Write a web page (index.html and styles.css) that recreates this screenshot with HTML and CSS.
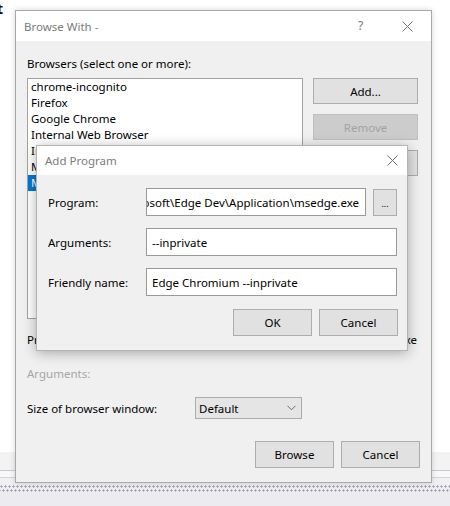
FILE: index.html
```html
<!DOCTYPE html>
<html>
<head>
<meta charset="utf-8">
<title>Browse With</title>
<link rel="stylesheet" href="styles.css">
</head>
<body>
<div class="desk">
  <div class="desk-top"></div>
  <div class="desk-band"></div>
  <div class="desk-band2"></div>
  <div class="desk-band3"></div>
  <div class="desk-dots"></div>
  <div class="desk-bottom"></div>
</div>
<span class="stray">t</span>

<div class="window browse">
  <div class="titlebar">
    <span class="title">Browse With -</span>
    <span class="cap help">?</span>
    <span class="cap"><svg width="11" height="11" viewBox="0 0 11 11"><path d="M0.5 0.5 L10.5 10.5 M10.5 0.5 L0.5 10.5" stroke="#6f6f6f" stroke-width="1" fill="none"/></svg></span>
  </div>
  <div class="body">
    <div class="label">Browsers (select one or more):</div>
    <div class="list-row">
      <ul class="listbox">
        <li>chrome-incognito</li>
        <li>Firefox</li>
        <li>Google Chrome</li>
        <li>Internal Web Browser</li>
        <li>Internet Explorer</li>
        <li>Microsoft Edge</li>
        <li class="selected">Microsoft Edge Chromium --inprivate</li>
      </ul>
      <div class="side-buttons">
        <button class="btn side">Add...</button>
        <button class="btn side disabled">Remove</button>
        <button class="btn side">Set as Default</button>
      </div>
    </div>
    <div class="prog-row">
      <span class="prog-label">Program:</span>
      <span class="prog-path"><span>C:\Program Files (x86)\Microsoft\Edge Dev\Application\msedge.exe</span></span>
    </div>
    <div class="args">Arguments:</div>
    <div class="size-row">
      <span class="size-label">Size of browser window:</span>
      <div class="select">
        <span>Default</span>
        <svg width="9" height="6" viewBox="0 0 9 6"><path d="M0.5 0.8 L4.5 4.8 L8.5 0.8" stroke="#6a6a6a" stroke-width="1" fill="none"/></svg>
      </div>
    </div>
    <div class="footer">
      <button class="btn foot">Browse</button>
      <button class="btn foot">Cancel</button>
    </div>
  </div>
</div>

<div class="window addprog">
  <div class="titlebar">
    <span class="title">Add Program</span>
    <span class="cap small"><svg width="11" height="11" viewBox="0 0 11 11"><path d="M0.5 0.5 L10.5 10.5 M10.5 0.5 L0.5 10.5" stroke="#6f6f6f" stroke-width="1" fill="none"/></svg></span>
  </div>
  <div class="body form">
    <div class="field-row">
      <span class="field-label">Program:</span>
      <div class="field-wrap">
        <div class="input prog"><span>C:\Program Files (x86)\Microsoft\Edge Dev\Application\msedge.exe</span></div>
        <button class="btn dots">...</button>
      </div>
    </div>
    <div class="field-row">
      <span class="field-label">Arguments:</span>
      <div class="input wide"><span>--inprivate</span></div>
    </div>
    <div class="field-row">
      <span class="field-label">Friendly name:</span>
      <div class="input wide"><span>Edge Chromium --inprivate</span></div>
    </div>
    <div class="form-footer">
      <button class="btn foot">OK</button>
      <button class="btn foot">Cancel</button>
    </div>
  </div>
</div>
</body>
</html>
```

FILE: styles.css
```css
* { box-sizing: border-box; }
html, body { margin: 0; padding: 0; }
body {
  width: 450px;
  height: 506px;
  position: relative;
  overflow: hidden;
  background: #ffffff;
  font-family: "Noto Sans", "Open Sans", sans-serif;
  font-size: 11.5px;
  color: #000;
}

/* desktop backdrop */
.desk { display: flex; flex-direction: column; height: 506px; }
.desk-top { height: 452px; background: #ffffff; }
.desk-band { height: 19px; background: #f3f3f3; border-bottom: 1px solid #c8c8da; }
.desk-band2 { height: 7px; background: #f8f8f9; border-bottom: 1px solid #d3d3e0; }
.desk-band3 { height: 7px; background: #f0f0f2; }
.desk-dots {
  height: 8px;
  background:
    radial-gradient(circle at 1.5px 1.5px, #9c9cab 0.9px, transparent 1.2px) 0 0 / 4px 8px,
    radial-gradient(circle at 1.5px 1.5px, #9c9cab 0.9px, transparent 1.2px) 2px 4px / 4px 8px,
    #eeeef2;
}
.desk-bottom { flex: 1; background: #ebebf0; }

.stray {
  position: absolute;
  left: -3px;
  top: -1px;
  font-weight: bold;
  font-size: 14px;
  color: #111;
}

/* windows */
.window {
  position: absolute;
  display: flex;
  flex-direction: column;
  background: #f0f0f0;
  border: 1px solid #a8a8a8;
}
.browse {
  left: 15px;
  top: 10px;
  width: 417px;
  height: 473px;
  box-shadow: 0 0 6px rgba(0, 0, 0, 0.16);
}
.addprog {
  left: 36px;
  top: 145px;
  width: 372px;
  height: 206px;
  border-color: #b4b4b4;
  box-shadow: 0 2px 12px rgba(0, 0, 0, 0.3);
}

.titlebar {
  background: #ffffff;
  display: flex;
  align-items: center;
  flex: none;
}
.browse .titlebar { height: 30px; padding-left: 8px; }
.addprog .titlebar { height: 29px; padding-left: 8px; padding-right: 1px; }
.title { flex: 1; color: #7b7b7b; font-size: 11.5px; }
.cap {
  width: 47px;
  height: 30px;
  display: flex;
  align-items: center;
  justify-content: center;
  color: #777;
  font-size: 12px;
}
.cap.help { padding-bottom: 1px; }
.cap.small { width: 28px; height: 29px; }

.body { flex: 1; display: flex; flex-direction: column; }

/* browse with body */
.browse .body { padding: 15px 13px 0 11px; }
.label { line-height: 16px; height: 16px; white-space: nowrap; }
.list-row { display: flex; gap: 10px; margin-top: 6px; }
.listbox {
  list-style: none;
  margin: 0;
  padding: 0;
  width: 276px;
  height: 241px;
  background: #fff;
  border: 1px solid #a3a3a3;
  overflow: hidden;
}
.listbox li {
  height: 16px;
  line-height: 16px;
  padding-left: 3px;
  white-space: nowrap;
}
.listbox li.selected { background: #0078d7; color: #fff; }

.side-buttons { display: flex; flex-direction: column; gap: 10px; }
.btn {
  font: inherit;
  color: #000;
  background: #e1e1e1;
  border: 1px solid #adadad;
  padding: 0;
  margin: 0;
  display: flex;
  align-items: center;
  justify-content: center;
}
.btn.side { width: 105px; height: 26px; }
.btn.disabled { background: #cccccc; border-color: #bfbfbf; color: #a3a3a3; }

.prog-row {
  margin-top: 13px;
  height: 16px;
  line-height: 16px;
  display: flex;
  justify-content: space-between;
  margin-right: 1px;
}
.prog-path {
  display: flex;
  justify-content: flex-end;
  overflow: hidden;
  white-space: nowrap;
  width: 250px;
}
.args { margin-top: 18px; height: 16px; line-height: 16px; color: #a6a6a6; }

.size-row { margin-top: 15px; display: flex; align-items: center; height: 22px; }
.size-label { width: 168px; white-space: nowrap; }
.select {
  width: 107px;
  height: 22px;
  background: #e5e5e5;
  border: 1px solid #acacac;
  display: flex;
  align-items: center;
  justify-content: space-between;
  padding: 0 5px 0 3px;
}

.footer {
  margin-top: 22px;
  margin-right: -2px;
  display: flex;
  justify-content: flex-end;
  gap: 7px;
}
.btn.foot { width: 79px; height: 27px; }

/* add program body */
.form { padding: 13px 9px 0 11px; }
.field-row { display: flex; align-items: center; height: 28px; margin-bottom: 12px; }
.field-label { width: 98px; white-space: nowrap; }
.field-wrap { display: flex; align-items: center; gap: 7px; }
.input {
  height: 28px;
  background: #fff;
  border: 1px solid #9a9a9a;
  display: flex;
  align-items: center;
  padding: 0 5px;
  white-space: nowrap;
  overflow: hidden;
}
.input.prog { width: 220px; justify-content: flex-end; padding-right: 6px; }
.input.wide { width: 251px; }
.btn.dots { width: 24px; height: 27px; align-items: flex-end; padding-bottom: 7px; font-size: 9px; line-height: 9px; }
.form-footer { display: flex; justify-content: flex-end; gap: 7px; margin-top: 1px; }
```
